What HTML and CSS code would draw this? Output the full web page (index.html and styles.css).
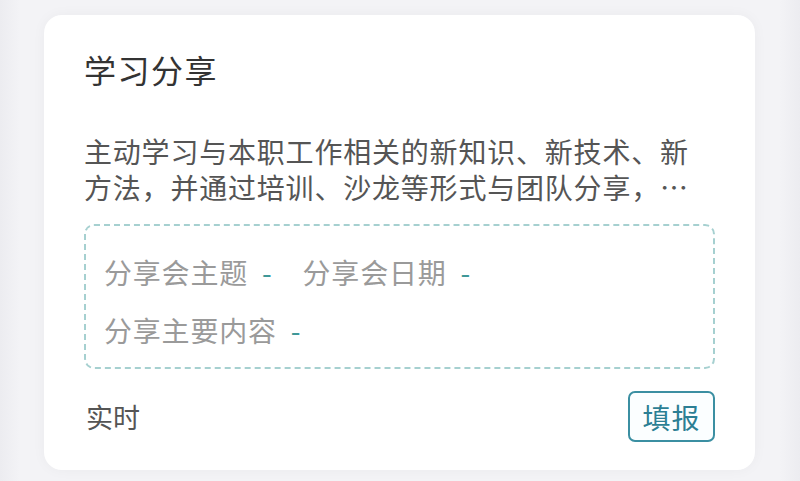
FILE: index.html
```html
<html>
    <head>
        <meta charset="utf-8">
        <title>学习分享</title>
        <link rel="stylesheet" href="styles.css">
    </head>
    <body>
        <div class="sayfa">
            <div class="kart">
                <h2 class="kart-baslik">学习分享</h2>
                <p class="kart-aciklama">主动学习与本职工作相关的新知识、新技术、新方法，并通过培训、沙龙等形式与团队分享，…</p>
                <div class="alanlar">
                    <div class="alan-satir">
                        <span class="alan">分享会主题<span class="tire">-</span></span>
                        <span class="alan">分享会日期<span class="tire">-</span></span>
                    </div>
                    <div class="alan-satir">
                        <span class="alan">分享主要内容<span class="tire">-</span></span>
                    </div>
                </div>
                <div class="kart-alt">
                    <span class="durum">实时</span>
                    <button class="doldur">填报</button>
                </div>
            </div>
        </div>
    </body>
</html>
```

FILE: styles.css
```css
body {
    margin: 0;
    font-family: "Noto Sans CJK SC", "Noto Sans", sans-serif;
    background: #e9e9ee;
}
.sayfa {
    height: 481px;
    box-sizing: border-box;
    padding: 15px 45px 11px 44px;
    background: linear-gradient(to right, #ececf0 0, #f3f3f6 20px, #f3f3f6 780px, #ececf0 800px);
}
.kart {
    background: #ffffff;
    border-radius: 18px;
    height: 455px;
    box-sizing: border-box;
    padding: 35px 40px 27px 40px;
    display: flex;
    flex-direction: column;
    box-shadow: 0 0 14px rgba(0, 0, 0, 0.04);
}
.kart-baslik {
    margin: 0;
    font-size: 32px;
    line-height: 38px;
    font-weight: normal;
    color: #333333;
    letter-spacing: 1.5px;
}
.kart-aciklama {
    margin: 45px 0 0 0;
    font-size: 28px;
    line-height: 36px;
    color: #555555;
    letter-spacing: 0.8px;
}
.alanlar {
    margin-top: 19px;
    height: 145px;
    box-sizing: border-box;
    border: 2px dashed #a6d0d0;
    border-radius: 10px;
    padding: 26px 18px 0 18px;
    display: flex;
    flex-direction: column;
    gap: 18px;
}
.alan-satir {
    display: flex;
    gap: 30px;
}
.alan {
    font-size: 28px;
    line-height: 40px;
    color: #9a9a9a;
    letter-spacing: 0.8px;
}
.tire {
    color: #3f9898;
    margin-left: 14px;
}
.kart-alt {
    margin-top: 22px;
    display: flex;
    justify-content: space-between;
    align-items: center;
}
.durum {
    font-size: 27px;
    color: #555555;
    padding-left: 2px;
}
.doldur {
    width: 87px;
    height: 51px;
    border: 2px solid #3b8fa2;
    border-radius: 7px;
    background: #fbfeff;
    color: #2c7f94;
    font-family: "Noto Sans CJK SC", "Noto Sans", sans-serif;
    font-size: 28px;
    padding: 0;
    letter-spacing: 1px;
}
```
